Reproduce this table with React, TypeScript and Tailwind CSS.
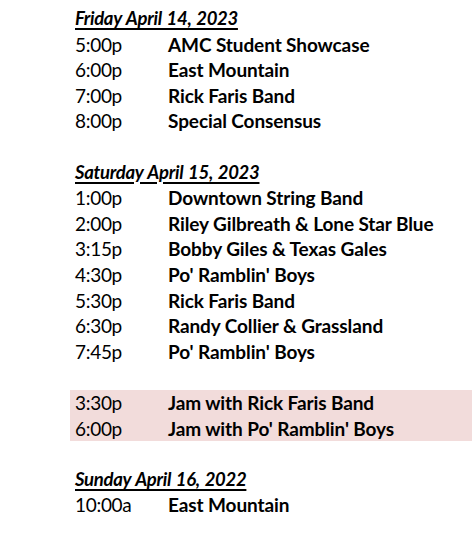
const friday = [
  ['5:00p', 'AMC Student Showcase'],
  ['6:00p', 'East Mountain'],
  ['7:00p', 'Rick Faris Band'],
  ['8:00p', 'Special Consensus'],
]

const saturday = [
  ['1:00p', 'Downtown String Band'],
  ['2:00p', 'Riley Gilbreath & Lone Star Blue'],
  ['3:15p', 'Bobby Giles & Texas Gales'],
  ['4:30p', "Po' Ramblin' Boys"],
  ['5:30p', 'Rick Faris Band'],
  ['6:30p', 'Randy Collier & Grassland'],
  ['7:45p', "Po' Ramblin' Boys"],
]

const jams = [
  ['3:30p', 'Jam with Rick Faris Band'],
  ['6:00p', "Jam with Po' Ramblin' Boys"],
]

const sunday = [['10:00a', 'East Mountain']]

function Heading({ children }: { children: string }) {
  return (
    <div className="h-[25.6px] pl-[75px] text-[18.5px] font-bold italic tracking-[-0.3px] [word-spacing:1px] underline underline-offset-[3px] decoration-[1.5px]">
      {children}
    </div>
  )
}

function Row({ time, act }: { time: string; act: string }) {
  return (
    <div className="flex h-[25.6px] items-center">
      <span className="w-[98px] pl-[5px] tracking-[-0.3px]">{time}</span>
      <span className="font-bold tracking-[-0.1px]">{act}</span>
    </div>
  )
}

export default function App() {
  return (
    <div className="h-[533px] w-[472px] bg-white pt-[6px] text-[19px] leading-[25.6px] text-black [font-family:Lato,'Liberation_Sans',sans-serif]">
      <Heading>Friday April 14, 2023</Heading>
      <div className="pl-[70px]">
        {friday.map(([t, a]) => (
          <Row key={t} time={t} act={a} />
        ))}
      </div>
      <div className="h-[25.6px]" />
      <Heading>Saturday April 15, 2023</Heading>
      <div className="pl-[70px]">
        {saturday.map(([t, a]) => (
          <Row key={t + a} time={t} act={a} />
        ))}
      </div>
      <div className="h-[25.6px]" />
      <div className="ml-[70px] bg-[#f2dcdb]">
        {jams.map(([t, a]) => (
          <Row key={t} time={t} act={a} />
        ))}
      </div>
      <div className="h-[25.6px]" />
      <Heading>Sunday April 16, 2022</Heading>
      <div className="pl-[70px]">
        {sunday.map(([t, a]) => (
          <Row key={t} time={t} act={a} />
        ))}
      </div>
    </div>
  )
}
